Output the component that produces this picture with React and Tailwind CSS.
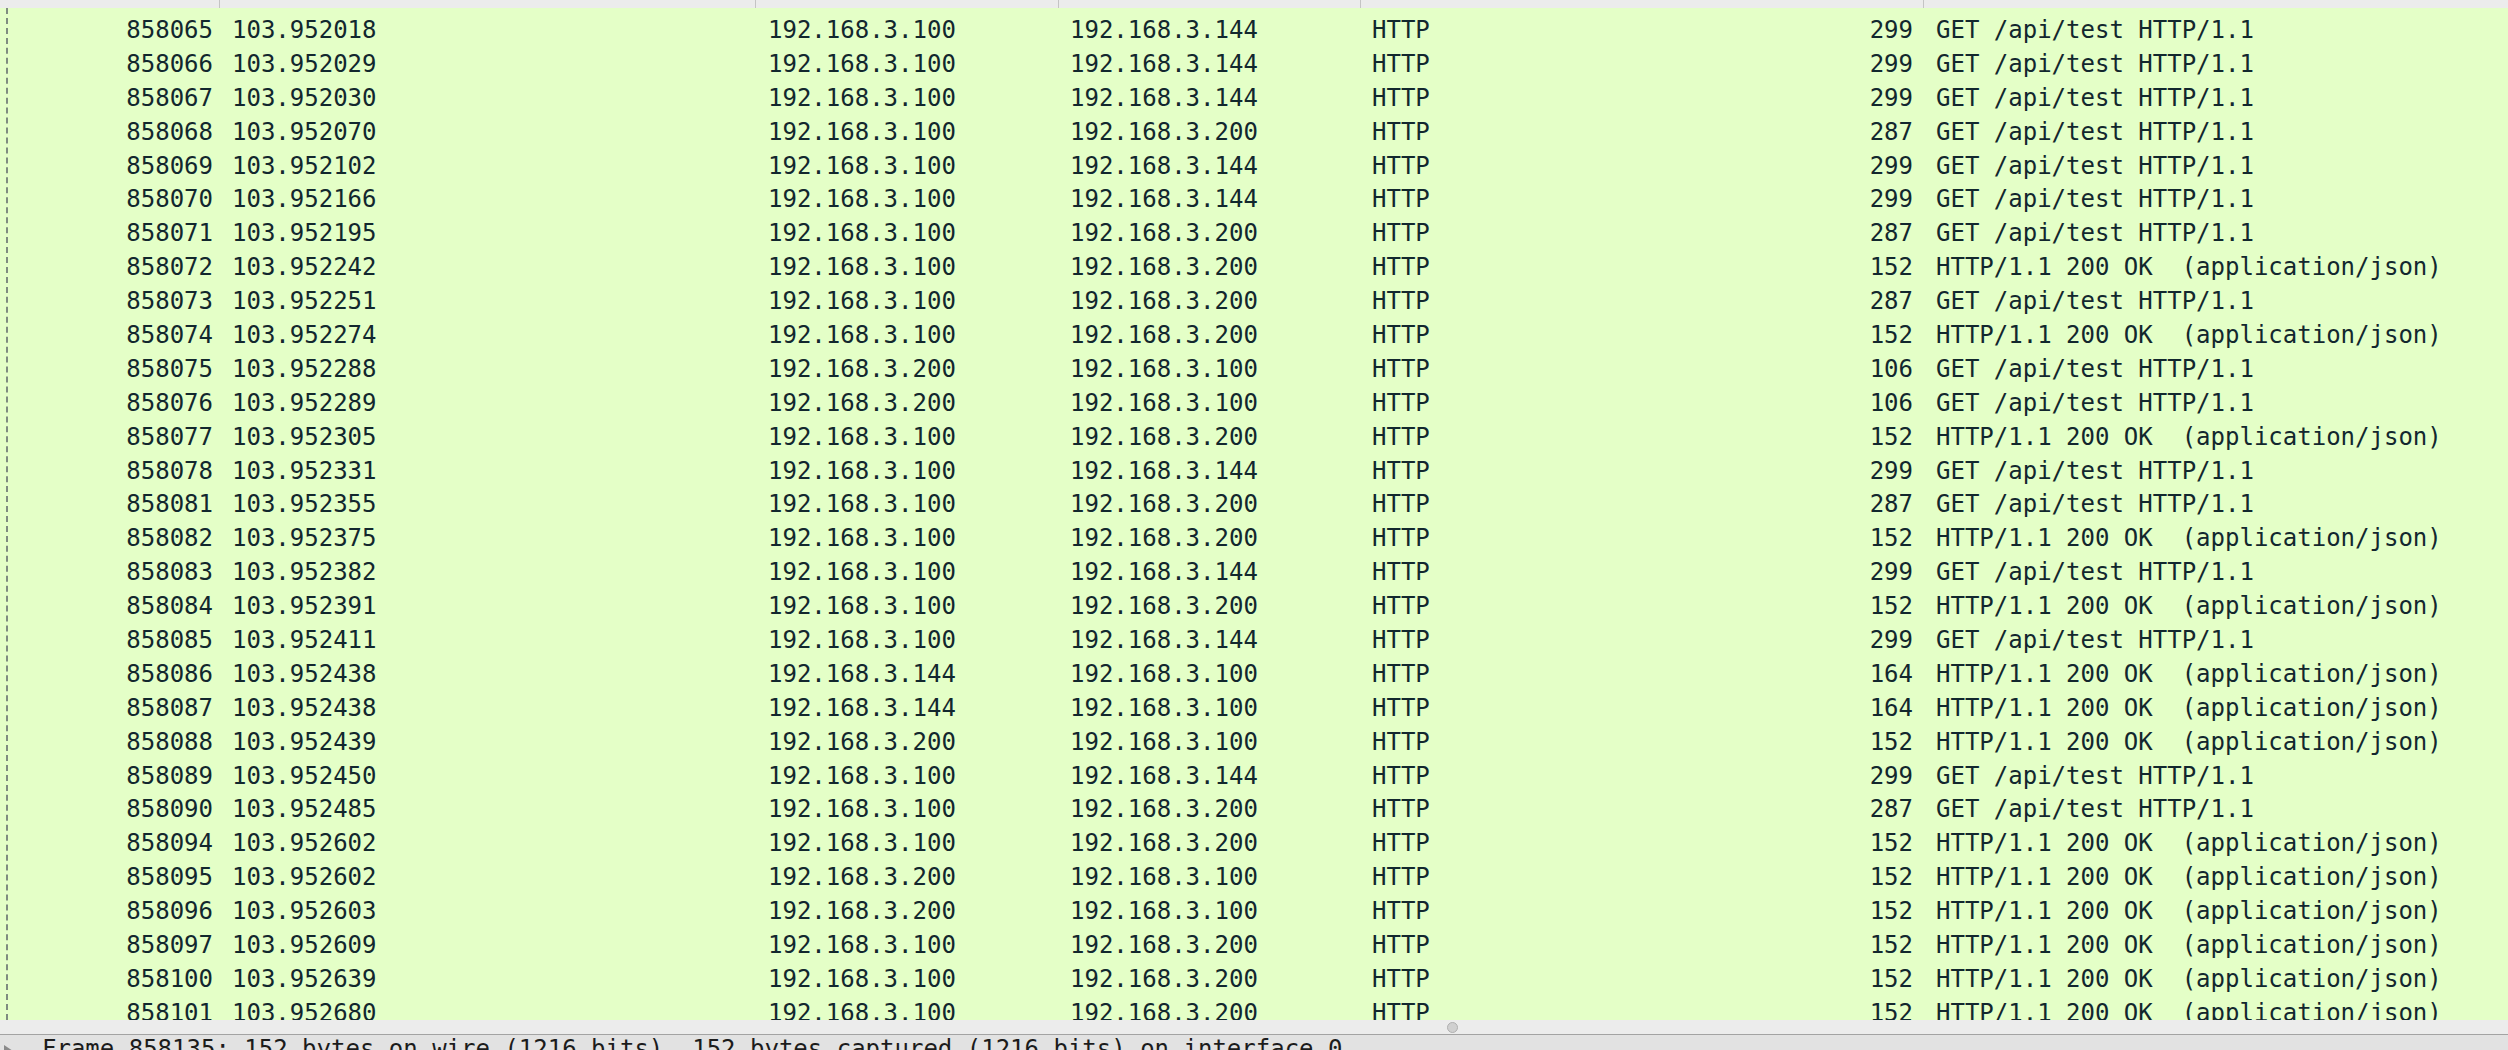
import React from 'react';

const rows = [
  ['858065', '103.952018', '100', '144', '299', 'g'],
  ['858066', '103.952029', '100', '144', '299', 'g'],
  ['858067', '103.952030', '100', '144', '299', 'g'],
  ['858068', '103.952070', '100', '200', '287', 'g'],
  ['858069', '103.952102', '100', '144', '299', 'g'],
  ['858070', '103.952166', '100', '144', '299', 'g'],
  ['858071', '103.952195', '100', '200', '287', 'g'],
  ['858072', '103.952242', '100', '200', '152', 'o'],
  ['858073', '103.952251', '100', '200', '287', 'g'],
  ['858074', '103.952274', '100', '200', '152', 'o'],
  ['858075', '103.952288', '200', '100', '106', 'g'],
  ['858076', '103.952289', '200', '100', '106', 'g'],
  ['858077', '103.952305', '100', '200', '152', 'o'],
  ['858078', '103.952331', '100', '144', '299', 'g'],
  ['858081', '103.952355', '100', '200', '287', 'g'],
  ['858082', '103.952375', '100', '200', '152', 'o'],
  ['858083', '103.952382', '100', '144', '299', 'g'],
  ['858084', '103.952391', '100', '200', '152', 'o'],
  ['858085', '103.952411', '100', '144', '299', 'g'],
  ['858086', '103.952438', '144', '100', '164', 'o'],
  ['858087', '103.952438', '144', '100', '164', 'o'],
  ['858088', '103.952439', '200', '100', '152', 'o'],
  ['858089', '103.952450', '100', '144', '299', 'g'],
  ['858090', '103.952485', '100', '200', '287', 'g'],
  ['858094', '103.952602', '100', '200', '152', 'o'],
  ['858095', '103.952602', '200', '100', '152', 'o'],
  ['858096', '103.952603', '200', '100', '152', 'o'],
  ['858097', '103.952609', '100', '200', '152', 'o'],
  ['858100', '103.952639', '100', '200', '152', 'o'],
  ['858101', '103.952680', '100', '200', '152', 'o'],
];

const info = {
  g: 'GET /api/test HTTP/1.1',
  o: 'HTTP/1.1 200 OK  (application/json)',
};

const mono = "font-['DejaVu_Sans_Mono','Liberation_Mono',monospace] text-[24px]";

function PacketRow({ r }) {
  return (
    <div className="flex h-[33.9px] shrink-0 items-center leading-[33.9px] whitespace-pre text-[#12272e]">
      <div className="w-[205px] shrink-0 text-right">{r[0]}</div>
      <div className="w-[543px] shrink-0 pl-[19px]">{r[1]}</div>
      <div className="w-[303px] shrink-0 pl-[12px]">192.168.3.{r[2]}</div>
      <div className="w-[302px] shrink-0 pl-[11px]">192.168.3.{r[3]}</div>
      <div className="w-[400px] shrink-0 pl-[11px]">HTTP</div>
      <div className="w-[163px] shrink-0 pr-[11px] text-right">{r[4]}</div>
      <div className="flex-1 pl-[12px]">{info[r[5]]}</div>
    </div>
  );
}

export default function App() {
  return (
    <div className={`flex h-[1050px] w-full flex-col overflow-hidden bg-[#ececec] ${mono}`}>
      {/* column header, mostly scrolled out */}
      <div className="flex h-[8px] shrink-0 bg-[#ececec]">
        <div className="w-[220px] shrink-0 border-r border-[#c4c4c4]"></div>
        <div className="w-[536px] shrink-0 border-r border-[#c4c4c4]"></div>
        <div className="w-[303px] shrink-0 border-r border-[#c4c4c4]"></div>
        <div className="w-[302px] shrink-0 border-r border-[#c4c4c4]"></div>
        <div className="w-[563px] shrink-0 border-r border-[#c4c4c4]"></div>
        <div className="flex-1"></div>
      </div>

      {/* packet list */}
      <div className="flex h-[1012px] shrink-0 overflow-hidden bg-[#e4ffc7]">
        <div className="w-[6px] shrink-0"></div>
        <div className="flex flex-1 flex-col border-l-2 border-dashed border-[#7f8c80] pt-[6px]">
          {rows.map((r) => (
            <PacketRow key={r[0]} r={r} />
          ))}
        </div>
      </div>

      {/* splitter */}
      <div className="flex h-[15px] shrink-0 items-center border-b border-[#a3a3a3] bg-[#ececec]">
        <div className="ml-[1447px] h-[11px] w-[11px] rounded-full border border-[#b0b0b0] bg-[#d0d0d0]"></div>
      </div>

      {/* packet details */}
      <div className="flex flex-1 items-start bg-[#e2e2e2] pt-[1px] leading-[27px] whitespace-pre text-[#1c1c1c]">
        <svg className="mt-[9px] ml-[4px] shrink-0" width="9" height="12" viewBox="0 0 9 12">
          <path d="M0 0 L9 6 L0 12 Z" fill="#8a8a8a" />
        </svg>
        <span className="ml-[29px]">Frame 858135: 152 bytes on wire (1216 bits), 152 bytes captured (1216 bits) on interface 0</span>
      </div>
    </div>
  );
}
